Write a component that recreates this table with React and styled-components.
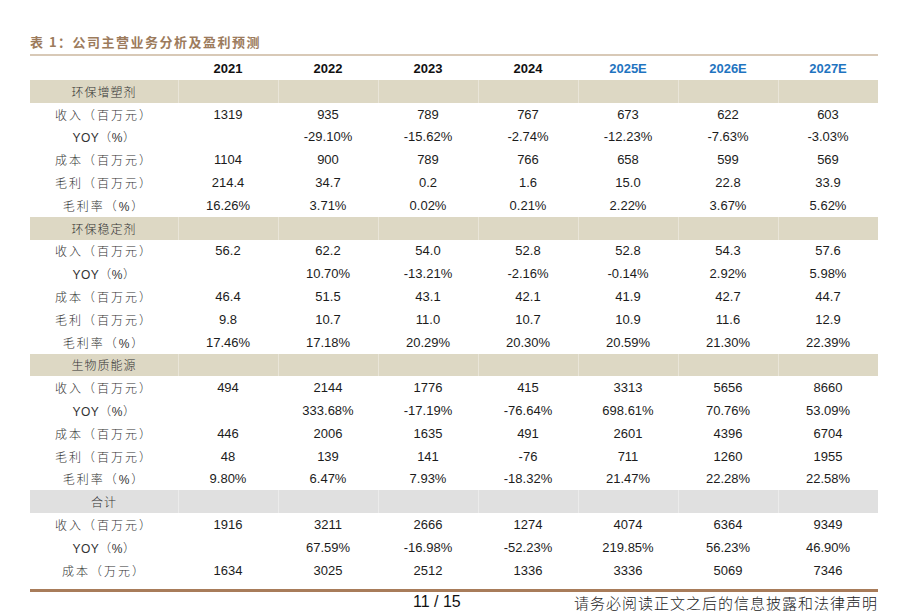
import React from 'react'
import styled, { createGlobalStyle } from 'styled-components';

const GlobalStyle = createGlobalStyle`
  body {
    margin: 0;
    background: #ffffff;
  }
`;

const years = ['2021', '2022', '2023', '2024', '2025E', '2026E', '2027E'];

const sections = [
  {
    name: '环保增塑剂',
    tone: 'tan',
    rows: [
      ['收入（百万元）', '1319', '935', '789', '767', '673', '622', '603'],
      ['YOY（%）', '', '-29.10%', '-15.62%', '-2.74%', '-12.23%', '-7.63%', '-3.03%'],
      ['成本（百万元）', '1104', '900', '789', '766', '658', '599', '569'],
      ['毛利（百万元）', '214.4', '34.7', '0.2', '1.6', '15.0', '22.8', '33.9'],
      ['毛利率（%）', '16.26%', '3.71%', '0.02%', '0.21%', '2.22%', '3.67%', '5.62%'],
    ],
  },
  {
    name: '环保稳定剂',
    tone: 'tan',
    rows: [
      ['收入（百万元）', '56.2', '62.2', '54.0', '52.8', '52.8', '54.3', '57.6'],
      ['YOY（%）', '', '10.70%', '-13.21%', '-2.16%', '-0.14%', '2.92%', '5.98%'],
      ['成本（百万元）', '46.4', '51.5', '43.1', '42.1', '41.9', '42.7', '44.7'],
      ['毛利（百万元）', '9.8', '10.7', '11.0', '10.7', '10.9', '11.6', '12.9'],
      ['毛利率（%）', '17.46%', '17.18%', '20.29%', '20.30%', '20.59%', '21.30%', '22.39%'],
    ],
  },
  {
    name: '生物质能源',
    tone: 'tan',
    rows: [
      ['收入（百万元）', '494', '2144', '1776', '415', '3313', '5656', '8660'],
      ['YOY（%）', '', '333.68%', '-17.19%', '-76.64%', '698.61%', '70.76%', '53.09%'],
      ['成本（百万元）', '446', '2006', '1635', '491', '2601', '4396', '6704'],
      ['毛利（百万元）', '48', '139', '141', '-76', '711', '1260', '1955'],
      ['毛利率（%）', '9.80%', '6.47%', '7.93%', '-18.32%', '21.47%', '22.28%', '22.58%'],
    ],
  },
  {
    name: '合计',
    tone: 'gray',
    rows: [
      ['收入（百万元）', '1916', '3211', '2666', '1274', '4074', '6364', '9349'],
      ['YOY（%）', '', '67.59%', '-16.98%', '-52.23%', '219.85%', '56.23%', '46.90%'],
      ['成本（万元）', '1634', '3025', '2512', '1336', '3336', '5069', '7346'],
    ],
  },
];

const App = () => {
  return (
    <Page>
      <GlobalStyle />
      <Title>表 1：公司主营业务分析及盈利预测</Title>
      <Table>
        <HeaderRow>
          <Cell />
          {years.map((y) => (
            <HeadCell key={y} $forecast={y.endsWith('E')}>{y}</HeadCell>
          ))}
        </HeaderRow>
        {sections.map((s) => (
          <React.Fragment key={s.name}>
            <BandRow $tone={s.tone}>
              <BandLabel>{s.name}</BandLabel>
              {years.map((y) => <BandCell key={y} />)}
            </BandRow>
            {s.rows.map((r, i) => (
              <DataRow key={i}>
                <RowLabel $latin={r[0].startsWith('YOY')}>{r[0]}</RowLabel>
                {r.slice(1).map((v, j) => (
                  <Cell key={j}>{v}</Cell>
                ))}
              </DataRow>
            ))}
          </React.Fragment>
        ))}
      </Table>
      <Footer>
        <PageNum>11 / 15</PageNum>
        <Disclaimer>请务必阅读正文之后的信息披露和法律声明</Disclaimer>
      </Footer>
    </Page>
  )
}

export default App;


const Page = styled.div`
  width: 848px;
  padding: 0 24px 0 30px;
  font-family: "Liberation Sans", Arial, sans-serif;
`;

const Title = styled.div`
  padding-top: 32px;
  padding-bottom: 2px;
  line-height: 20px;
  border-bottom: 2px solid #d8c9b7;
  font-family: "Noto Sans CJK SC", sans-serif;
  font-weight: 700;
  font-size: 13px;
  letter-spacing: 1.5px;
  color: #9c7b5c;
`;

const Table = styled.div`
  display: flex;
  flex-direction: column;
`;

const Row = styled.div`
  display: grid;
  grid-template-columns: 148px repeat(7, 100px);
  align-items: center;
`;

const HeaderRow = styled(Row)`
  height: 24px;
`;

const DataRow = styled(Row)`
  height: 22.8px;
`;

const BandRow = styled(Row)`
  height: 22.8px;
  align-items: stretch;
  background: ${(p) => (p.$tone === 'gray' ? '#e0e0e0' : '#ddd8c4')};
`;

const Cell = styled.div`
  text-align: center;
  font-size: 13px;
  color: #1c1c1c;
`;

const HeadCell = styled(Cell)`
  font-weight: 700;
  color: ${(p) => (p.$forecast ? '#1f74c0' : '#111111')};
`;

const BandCell = styled.div`
  border-left: 1px solid rgba(255, 255, 255, 0.35);
`;

const RowLabel = styled.div`
  text-align: center;
  font-family: "Liberation Sans", "Noto Sans CJK SC", sans-serif;
  font-weight: 300;
  font-size: 12px;
  letter-spacing: ${(p) => (p.$latin ? '0.5px' : '2px')};
  color: #333333;
`;

const BandLabel = styled(RowLabel)`
  display: flex;
  align-items: center;
  justify-content: center;
  letter-spacing: 1px;
`;

const Footer = styled.div`
  margin-top: 7px;
  border-top: 3px solid #a87c5a;
  display: grid;
  grid-template-columns: 383px auto 1fr;
  align-items: center;
  height: 20px;
`;

const PageNum = styled.div`
  grid-column: 2;
  font-size: 16px;
  color: #111111;
`;

const Disclaimer = styled.div`
  justify-self: end;
  font-family: "Noto Sans CJK SC", sans-serif;
  font-weight: 300;
  font-size: 15px;
  letter-spacing: 1px;
  color: #222222;
`;
